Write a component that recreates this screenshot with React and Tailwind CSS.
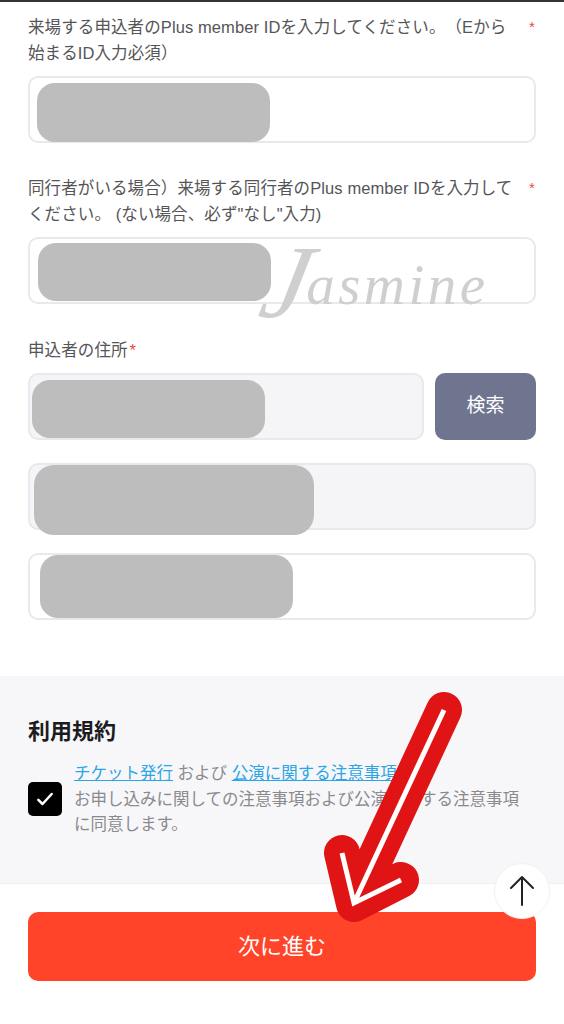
const jpFont = "font-['Liberation_Sans','Noto_Sans_CJK_JP',sans-serif]";

const Label = ({ children, star = 'end' }) => (
  <div className="flex justify-between text-[16.5px] leading-[26px] tracking-[0.1px] text-[#555558] [text-spacing-trim:space-all]">
    <p className={star === 'end' ? 'w-[492px]' : ''}>
      {children}
      {star === 'inline' && <span className="ml-0.5 text-[#f04a36]">*</span>}
    </p>
    {star === 'end' && <span className="mr-[1px] text-[15px] text-[#f04a36]">*</span>}
  </div>
);

const Field = ({ gray, className = '', children }) => (
  <div className={`flex h-[67px] items-start rounded-[10px] border-2 border-[#e8e8ee] ${gray ? 'bg-[#f5f5f7]' : 'bg-white'} ${className}`}>
    {children}
  </div>
);

const Redact = ({ className }) => <div className={`shrink-0 bg-[#bdbdbd] ${className}`} />;

const App = () => {
  return (
    <div className={`relative h-[1024px] w-[564px] overflow-hidden bg-white ${jpFont}`}>
      <div className="h-[2px] bg-[#333333]" />

      <div className="px-[28px] pt-3">
        <Label>来場する申込者のPlus member IDを入力してください。（Eから始まるID入力必須）</Label>
        <Field className="mt-[10px]">
          <Redact className="ml-[7px] mt-[5px] h-[59px] w-[233px] rounded-[18px]" />
        </Field>

        <div className="mt-[32px]">
          <Label>同行者がいる場合）来場する同行者のPlus member IDを入力してください。 (ない場合、必ず"なし"入力)</Label>
        </div>
        <div className="relative mt-[10px]">
          <Field>
            <Redact className="ml-2 mt-1 h-[58px] w-[233px] rounded-[18px]" />
          </Field>
          <span className="absolute left-[236px] top-[-10px] flex items-baseline font-['Liberation_Serif',serif] italic leading-[84px] text-[#cfcfcf]">
            <span className="inline-block translate-y-[13px] -skew-x-12 text-[104px]">J</span>
            <span className="-ml-[4px] text-[57px] tracking-[3.5px]">asmine</span>
          </span>
        </div>

        <div className="mt-[33px]">
          <Label star="inline">申込者の住所</Label>
        </div>
        <div className="mt-[10px] flex gap-[11px]">
          <Field gray className="flex-1">
            <Redact className="ml-[2px] mt-[5px] h-[58px] w-[233px] rounded-[18px]" />
          </Field>
          <button className="h-[67px] w-[101px] rounded-[10px] bg-[#70758f] text-[19px] text-white">
            検索
          </button>
        </div>
        <Field gray className="mt-[23px]">
          <Redact className="ml-[4px] mt-0 h-[70px] w-[280px] rounded-[20px]" />
        </Field>
        <Field className="mt-[23px]">
          <Redact className="ml-[10px] mt-0 h-[63px] w-[253px] rounded-[18px]" />
        </Field>
      </div>

      <section className="mt-[56px] h-[208px] border-b border-[#efeff2] bg-[#f7f7f9] px-[28px] pt-[42px]">
        <h2 className="text-[22px] font-bold leading-[28px] text-[#1c1c1e]">利用規約</h2>
        <div className="mt-[15px] flex items-center gap-3">
          <span className="flex h-[34px] w-[34px] shrink-0 items-center justify-center rounded-[5px] bg-black">
            <svg className="h-5 w-5" viewBox="0 0 24 24" fill="none" stroke="white" strokeWidth={3} strokeLinecap="round" strokeLinejoin="round">
              <path d="M4 13l5 5L20 6" />
            </svg>
          </span>
          <p className="w-[455px] text-[16.5px] leading-[25.5px] text-[#8a8a8e]">
            <a className="text-[#2ba5e6] underline">チケット発行</a> および <a className="text-[#2ba5e6] underline">公演に関する注意事項</a>
            <br />
            お申し込みに関しての注意事項および公演に関する注意事項に同意します。
          </p>
        </div>
      </section>

      <div className="px-[28px] pt-[28px]">
        <button className="h-[69px] w-full rounded-[10px] bg-[#ff4429] text-[22px] text-white">
          次に進む
        </button>
      </div>

      <button className="absolute left-[494px] top-[863px] flex h-[56px] w-[56px] items-center justify-center rounded-full border border-[#f1f1f3] bg-white">
        <svg className="h-[34px] w-[34px]" viewBox="0 0 34 34" fill="none" stroke="#222222" strokeWidth={2} strokeLinecap="round" strokeLinejoin="round">
          <path d="M17 31V3M6 14L17 3l11 11" />
        </svg>
      </button>

      <svg className="absolute left-0 top-0" width="564" height="1024" viewBox="0 0 564 1024" fill="none" strokeLinecap="round" strokeLinejoin="round">
        <g stroke="#e01414" strokeWidth={36}>
          <path d="M444 710L354 904M342 853L354 904L401 880" />
        </g>
        <g stroke="white" strokeWidth={5} strokeLinecap="butt" strokeLinejoin="miter">
          <path d="M444 710L354 903M342 853L354 903L401 880" />
        </g>
      </svg>
    </div>
  );
};

export default App;
